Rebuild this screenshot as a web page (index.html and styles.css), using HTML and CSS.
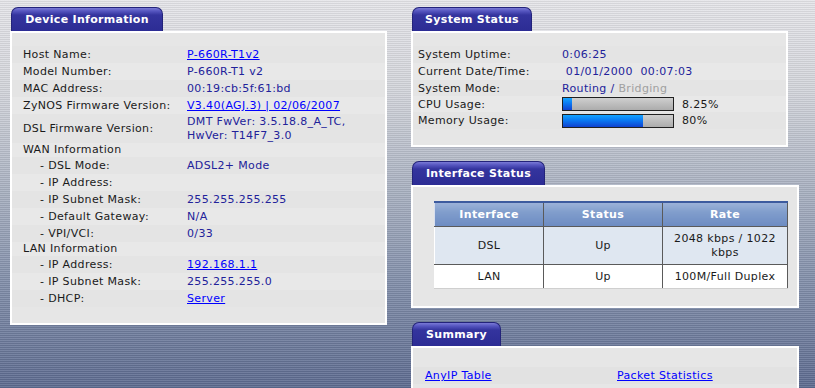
FILE: index.html
```html
<!DOCTYPE html>
<html>
<head>
<meta charset="utf-8">
<link rel="stylesheet" href="styles.css">
</head>
<body>
<div class="page">
  <div class="col col-left">
    <section class="panel">
      <div class="tab tab-device">Device Information</div>
      <div class="box box-device">
        <div class="row"><span class="lbl">Host Name:</span><a class="link" href="#">P-660R-T1v2</a></div>
        <div class="row alt"><span class="lbl">Model Number:</span><span class="val">P-660R-T1 v2</span></div>
        <div class="row"><span class="lbl">MAC Address:</span><span class="val">00:19:cb:5f:61:bd</span></div>
        <div class="row alt"><span class="lbl">ZyNOS Firmware Version:</span><a class="link" href="#">V3.40(AGJ.3) | 02/06/2007</a></div>
        <div class="row row-double"><span class="lbl">DSL Firmware Version:</span><span class="val">DMT FwVer: 3.5.18.8_A_TC,<br>HwVer: T14F7_3.0</span></div>
        <div class="row row-head alt"><span class="lbl">WAN Information</span></div>
        <div class="row"><span class="lbl sub">- DSL Mode:</span><span class="val">ADSL2+ Mode</span></div>
        <div class="row alt"><span class="lbl sub">- IP Address:</span><span class="val"></span></div>
        <div class="row"><span class="lbl sub">- IP Subnet Mask:</span><span class="val">255.255.255.255</span></div>
        <div class="row alt"><span class="lbl sub">- Default Gateway:</span><span class="val">N/A</span></div>
        <div class="row"><span class="lbl sub">- VPI/VCI:</span><span class="val">0/33</span></div>
        <div class="row row-head alt"><span class="lbl">LAN Information</span></div>
        <div class="row"><span class="lbl sub">- IP Address:</span><a class="link" href="#">192.168.1.1</a></div>
        <div class="row alt"><span class="lbl sub">- IP Subnet Mask:</span><span class="val">255.255.255.0</span></div>
        <div class="row"><span class="lbl sub">- DHCP:</span><a class="link" href="#">Server</a></div>
      </div>
    </section>
  </div>

  <div class="col col-right">
    <section class="panel">
      <div class="tab tab-system">System Status</div>
      <div class="box box-system">
        <div class="srow r17"><span class="slbl">System Uptime:</span><span class="val">0:06:25</span></div>
        <div class="srow r17 alt"><span class="slbl">Current Date/Time:</span><span class="val">&nbsp;01/01/2000&nbsp; 00:07:03</span></div>
        <div class="srow r16"><span class="slbl">System Mode:</span><span class="val">Routing / <span class="dim">Bridging</span></span></div>
        <div class="srow r16 alt"><span class="slbl">CPU Usage:</span><span class="meter"><span class="bar"><span class="fill" style="width:8%"></span></span><span class="pct">8.25%</span></span></div>
        <div class="srow r17"><span class="slbl">Memory Usage:</span><span class="meter"><span class="bar"><span class="fill" style="width:73%"></span></span><span class="pct">80%</span></span></div>
      </div>
    </section>

    <section class="panel panel-gap">
      <div class="tab tab-iface">Interface Status</div>
      <div class="box box-iface">
        <table class="itable">
          <thead>
            <tr><th class="c1">Interface</th><th class="c2">Status</th><th class="c3">Rate</th></tr>
          </thead>
          <tbody>
            <tr class="tr-dsl"><td>DSL</td><td>Up</td><td>2048 kbps / 1022<br>kbps</td></tr>
            <tr class="tr-lan"><td>LAN</td><td>Up</td><td>100M/Full Duplex</td></tr>
          </tbody>
        </table>
      </div>
    </section>

    <section class="panel panel-gap">
      <div class="tab tab-summary">Summary</div>
      <div class="box box-summary">
        <div class="sumrow"><a class="link sumcell" href="#">AnyIP Table</a><a class="link" href="#">Packet Statistics</a></div>
      </div>
    </section>
  </div>
</div>
</body>
</html>
```

FILE: styles.css
```css
html, body {
  margin: 0;
  padding: 0;
  height: 388px;
  overflow: hidden;
}

body {
  font-family: "DejaVu Sans", Verdana, sans-serif;
  font-size: 11px;
  letter-spacing: 0.35px;
  color: #1a1a1a;
  background:
    repeating-linear-gradient(to bottom, rgba(255,255,255,0.10) 0, rgba(255,255,255,0.10) 1px, rgba(0,0,0,0.07) 1px, rgba(0,0,0,0.07) 2px),
    linear-gradient(to bottom, #e6e6ea 0, #d4d6dc 90px, #aab2c2 190px, #8390ab 280px, #5d6b90 388px);
}

.page {
  display: flex;
  align-items: flex-start;
  gap: 24px;
  padding: 7px 0 0 10px;
}

.col {
  display: flex;
  flex-direction: column;
}

.col-left { width: 377px; }
.col-right { width: 388px; }

.panel-gap { margin-top: 14px; }

.tab {
  height: 24px;
  margin-left: 1px;
  box-sizing: border-box;
  border: 1px solid #23237a;
  border-bottom: none;
  border-radius: 7px 7px 0 0;
  background: linear-gradient(to bottom, #7a7ad6 0, #5656c0 3px, #34349e 7px, #2c2c94 100%);
  color: #ffffff;
  font-weight: bold;
  font-size: 11px;
  line-height: 24px;
  text-align: center;
  white-space: nowrap;
  letter-spacing: 0.3px;
}

.tab-device { width: 152px; }
.tab-system { width: 120px; }
.tab-iface { width: 133px; }
.tab-summary { width: 89px; }

.box {
  border: 2px solid #ffffff;
  background: #e6e6e6;
  box-sizing: border-box;
}

.box-device {
  width: 377px;
  height: 294px;
  padding: 13px 0 0 0;
}

.row {
  display: grid;
  grid-template-columns: 164px 1fr;
  height: 17px;
  line-height: 17px;
  padding-left: 11px;
  background: #e4e4e4;
}

.row.alt { background: #e8e8e8; }

.row-double {
  height: 29px;
  line-height: 14px;
  align-items: center;
}

.row-head {
  height: 14px;
  line-height: 14px;
}

.lbl { white-space: nowrap; }
.lbl.sub { padding-left: 17px; }

.val {
  color: #22229a;
  white-space: nowrap;
}

.link {
  color: #0000ff;
  text-decoration: underline;
  white-space: nowrap;
}

.box-system {
  width: 377px;
  height: 116px;
  padding: 13px 0 0 0;
}

.srow {
  display: grid;
  grid-template-columns: 144px 1fr;
  align-items: center;
  padding-left: 5px;
  background: #e4e4e4;
}

.srow.alt { background: #e8e8e8; }
.r17 { height: 17px; }
.r16 { height: 16px; }

.slbl { white-space: nowrap; }

.dim { color: #a0a0a0; }

.meter {
  display: flex;
  align-items: center;
  gap: 8px;
}

.bar {
  display: block;
  width: 112px;
  height: 14px;
  box-sizing: border-box;
  border: 1px solid #202020;
  background: linear-gradient(to bottom, #cfcfcf 0, #bdbdbd 50%, #acacac 100%);
}

.fill {
  display: block;
  height: 100%;
  background: linear-gradient(to bottom, #14a4ff 0, #0a78f2 45%, #1042d0 100%);
}

.pct { color: #1a1a1a; }

.box-iface {
  width: 388px;
  height: 123px;
  padding: 14px 0 0 21px;
}

.itable {
  width: 354px;
  border-collapse: collapse;
  border: 1px solid #cfcfcf;
  font-size: 11px;
  text-align: center;
}

.itable th {
  height: 23px;
  padding: 0;
  color: #ffffff;
  font-weight: bold;
  border-top: 2px solid #3c5a9e;
  border-left: 1px solid #d8dfee;
  border-right: 1px solid #5a5a5a;
  border-bottom: 1px solid #5a5a5a;
  background: linear-gradient(to bottom, #9bb1d8 0, #809dcc 40%, #6d8cc2 100%);
}

.itable th.c1 { width: 108px; }
.itable th.c2 { width: 118px; }

.itable td {
  padding: 0 4px;
  color: #1a1a1a;
  line-height: 14px;
  border-left: 1px solid #ffffff;
  border-right: 1px solid #5a5a5a;
  border-bottom: 1px solid #5a5a5a;
}

.tr-dsl td {
  height: 37px;
  background: #dfe7f1;
}

.tr-lan td {
  height: 23px;
  background: #ffffff;
  border-bottom-color: #cfcfcf;
}

.box-summary {
  width: 388px;
  height: 60px;
  padding: 19px 0 0 0;
}

.sumrow {
  display: flex;
  height: 17px;
  line-height: 17px;
  padding-left: 12px;
  background: #e2e2e2;
}

.sumcell { width: 192px; }
```
